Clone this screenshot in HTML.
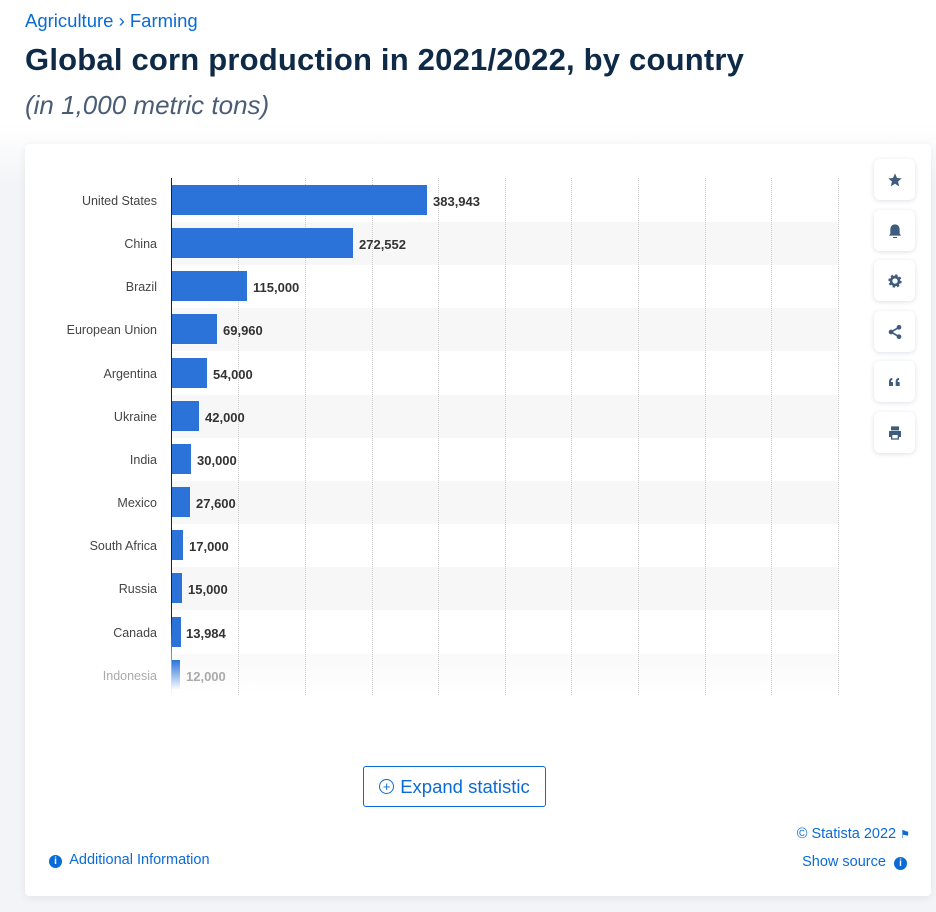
<!DOCTYPE html>
<html><head><style>
body{margin:0;width:936px;height:912px;background:#fff;font-family:"Liberation Sans",sans-serif;position:relative;overflow:hidden}
.bc{position:absolute;left:25px;top:10px;font-size:18.5px;color:#0a6bd6}
h1{position:absolute;left:25px;top:42px;margin:0;font-size:31px;font-weight:bold;color:#0f2a47;letter-spacing:0.2px}
.sub{position:absolute;left:25px;top:90px;font-size:26px;font-style:italic;color:#4a5d75}
.bgwrap{position:absolute;left:0;top:125px;width:936px;height:787px;background:linear-gradient(#fff,#f3f4f7 60px)}
.card{position:absolute;left:25px;top:144px;width:906px;height:752px;background:#fff;border-radius:4px;box-shadow:0 2px 8px rgba(30,50,90,.08)}
.row{position:absolute;left:172px;width:666px;height:43px}
.lab{position:absolute;right:779px;font-size:12.5px;color:#444;text-align:right;white-space:nowrap}
.bar{position:absolute;left:172px;height:30px;background:#2b72d9}
.val{position:absolute;font-size:13px;font-weight:bold;color:#333}
.grid{position:absolute;top:178px;height:517px;border-left:1px dotted #ccc}
.btn{position:absolute;left:874px;width:41px;height:41px;background:#fff;border-radius:6px;box-shadow:0 1px 5px rgba(30,50,90,.15);display:flex;align-items:center;justify-content:center}
.exp{position:absolute;left:363px;top:766px;height:41px;border:1px solid #0a6bd6;border-radius:3px;color:#0a6bd6;font-size:18.5px;display:flex;align-items:center;justify-content:center;box-sizing:border-box;width:183px}
.lk{position:absolute;color:#0a6bd6;font-size:14.5px}
.ic{display:inline-block;width:13px;height:13px;border-radius:50%;background:#0a6bd6;color:#fff;font-size:10px;font-weight:bold;text-align:center;line-height:13px;vertical-align:0px}
</style></head><body>
<div class="bgwrap"></div>
<div class="bc">Agriculture › Farming</div>
<h1>Global corn production in 2021/2022, by country</h1>
<div class="sub">(in 1,000 metric tons)</div>
<div class="card"></div>
<div class="row" style="top:222px;background:#f7f7f8"></div>
<div class="row" style="top:308px;background:#f7f7f8"></div>
<div class="row" style="top:395px;background:#f7f7f8"></div>
<div class="row" style="top:481px;background:#f7f7f8"></div>
<div class="row" style="top:567px;background:#f7f7f8"></div>
<div class="row" style="top:654px;background:linear-gradient(#f9f9fa,#fff)"></div>
<div class="grid" style="left:238px"></div><div class="grid" style="left:305px"></div><div class="grid" style="left:372px"></div><div class="grid" style="left:438px"></div><div class="grid" style="left:505px"></div><div class="grid" style="left:571px"></div><div class="grid" style="left:638px"></div><div class="grid" style="left:705px"></div><div class="grid" style="left:771px"></div><div class="grid" style="left:838px"></div>
<div style="position:absolute;left:171px;top:178px;width:1px;height:517px;background:linear-gradient(#222 85%,#fff)"></div>

<div class="lab" style="top:194px">United States</div><div class="bar" style="top:185px;width:255px"></div><div class="val" style="top:194px;left:433px">383,943</div>
<div class="lab" style="top:237px">China</div><div class="bar" style="top:228px;width:181px"></div><div class="val" style="top:237px;left:359px">272,552</div>
<div class="lab" style="top:280px">Brazil</div><div class="bar" style="top:271px;width:75px"></div><div class="val" style="top:280px;left:253px">115,000</div>
<div class="lab" style="top:323px">European Union</div><div class="bar" style="top:314px;width:45px"></div><div class="val" style="top:323px;left:223px">69,960</div>
<div class="lab" style="top:367px">Argentina</div><div class="bar" style="top:358px;width:35px"></div><div class="val" style="top:367px;left:213px">54,000</div>
<div class="lab" style="top:410px">Ukraine</div><div class="bar" style="top:401px;width:27px"></div><div class="val" style="top:410px;left:205px">42,000</div>
<div class="lab" style="top:453px">India</div><div class="bar" style="top:444px;width:19px"></div><div class="val" style="top:453px;left:197px">30,000</div>
<div class="lab" style="top:496px">Mexico</div><div class="bar" style="top:487px;width:18px"></div><div class="val" style="top:496px;left:196px">27,600</div>
<div class="lab" style="top:539px">South Africa</div><div class="bar" style="top:530px;width:11px"></div><div class="val" style="top:539px;left:189px">17,000</div>
<div class="lab" style="top:582px">Russia</div><div class="bar" style="top:573px;width:10px"></div><div class="val" style="top:582px;left:188px">15,000</div>
<div class="lab" style="top:626px">Canada</div><div class="bar" style="top:617px;width:9px"></div><div class="val" style="top:626px;left:186px">13,984</div>
<div class="lab" style="top:669px;color:#aaa">Indonesia</div><div class="bar" style="top:660px;width:8px;background:linear-gradient(#2b72d9,#fff)"></div><div class="val" style="top:669px;left:186px;color:#aaa">12,000</div>

<div class="btn" style="top:159px"><svg width="16" height="16" viewBox="0 0 24 24"><path fill="#3f5b7e" d="M12 2l3 7 7 .6-5.4 4.7 1.7 7.2L12 17.6 5.7 21.5l1.7-7.2L2 9.6 9 9z"/></svg></div>
<div class="btn" style="top:210px"><svg width="16" height="16" viewBox="0 0 24 24"><path fill="#3f5b7e" d="M12 2c4 0 7 3 7 8v6l2 3H3l2-3v-6c0-5 3-8 7-8zM9 21h6v1.5H9z"/></svg></div>
<div class="btn" style="top:260px"><svg width="16" height="16" viewBox="0 0 24 24"><circle cx="12" cy="12" r="7.5" fill="none" stroke="#3f5b7e" stroke-width="5" stroke-dasharray="3 2.9"/><circle cx="12" cy="12" r="6" fill="none" stroke="#3f5b7e" stroke-width="4"/></svg></div>
<div class="btn" style="top:311px"><svg width="16" height="16" viewBox="0 0 24 24"><g fill="#3f5b7e"><circle cx="18" cy="5" r="3.5"/><circle cx="6" cy="12" r="3.5"/><circle cx="18" cy="19" r="3.5"/></g><path d="M18 5L6 12l12 7" stroke="#3f5b7e" stroke-width="2.5" fill="none"/></svg></div>
<div class="btn" style="top:361px"><svg width="16" height="16" viewBox="0 0 24 24"><path fill="#3f5b7e" d="M3 18v-6c0-4 2-6 5-6v3c-1.5 0-2 1-2 3h3v6zM13 18v-6c0-4 2-6 5-6v3c-1.5 0-2 1-2 3h3v6z"/></svg></div>
<div class="btn" style="top:412px"><svg width="16" height="16" viewBox="0 0 24 24"><path fill="#3f5b7e" d="M6 2h12v6H6zM3 9h18v9h-3v4H6v-4H3zM8 15v5h8v-5z"/></svg></div>

<div class="exp"><span style="display:inline-block;width:13px;height:13px;border:1.3px solid #0a6bd6;border-radius:50%;font-size:13px;line-height:13px;text-align:center;margin-right:6px">+</span>Expand statistic</div>
<div class="lk" style="right:26px;top:826px">© Statista 2022 <span style="font-size:11px">⚑</span></div>
<div class="lk" style="left:49px;top:852px"><span class="ic">i</span>&nbsp; Additional Information</div>
<div class="lk" style="right:29px;top:854px">Show source&nbsp; <span class="ic">i</span></div>
</body></html>
